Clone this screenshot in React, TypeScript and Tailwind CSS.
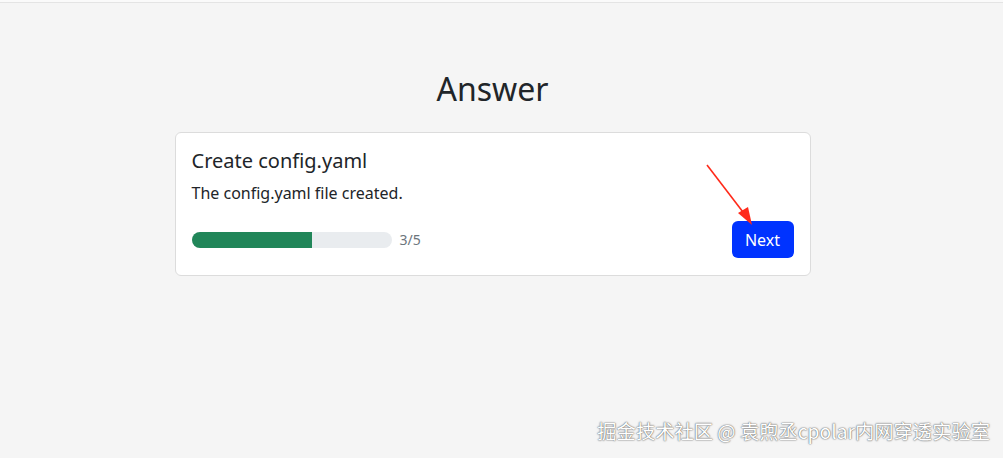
export default function App() {
  return (
    <div
      className="relative h-[458px] w-[1003px] overflow-hidden bg-[#f5f5f5] text-[#212529]"
      style={{ fontFamily: '"Noto Sans", "Open Sans", sans-serif' }}
    >
      <div className="h-[2px] bg-[#fafafa]" />
      <div className="h-[1px] bg-[#e4e4e4]" />
      <div className="w-[985px] pt-[67px]">
        <h1 className="text-center text-[32px] leading-[1.2] font-normal">Answer</h1>
        <div className="mx-auto mt-[24px] w-[636px] rounded-[6px] border border-[#dcdcdc] bg-white px-4 pt-4 pb-[17px]">
          <h5 className="text-[20px] leading-[1.2] font-normal">Create config.yaml</h5>
          <p className="mt-2 text-[16px] leading-6">The config.yaml file created.</p>
          <div className="mt-[16px] flex items-center justify-between">
            <div className="flex items-center gap-2">
              <div className="h-4 w-[200px] overflow-hidden rounded-full bg-[#e9ecef]">
                <div className="h-full w-[60%] bg-[#218659]" />
              </div>
              <span className="text-[14px] text-[#6c757d]">3/5</span>
            </div>
            <button className="h-[37px] w-[62px] rounded-[6px] bg-[#0033ff] text-[16px] text-white">
              Next
            </button>
          </div>
        </div>
      </div>

      <svg className="absolute left-0 top-0" width="1003" height="458" viewBox="0 0 1003 458">
        <line x1="707" y1="165" x2="746" y2="216" stroke="#ff2a1a" strokeWidth="1.6" />
        <polygon points="752,225 738,213 748,207" fill="#ff2a1a" />
      </svg>

      <div
        className="absolute right-[13px] top-[417px] text-[19.3px] text-white [text-shadow:0_0_1px_#555,0_0_2px_#777]"
        style={{ fontFamily: '"Noto Sans CJK SC", "Noto Sans", sans-serif' }}
      >
        掘金技术社区 @ 袁煦丞cpolar内网穿透实验室
      </div>
    </div>
  );
}
